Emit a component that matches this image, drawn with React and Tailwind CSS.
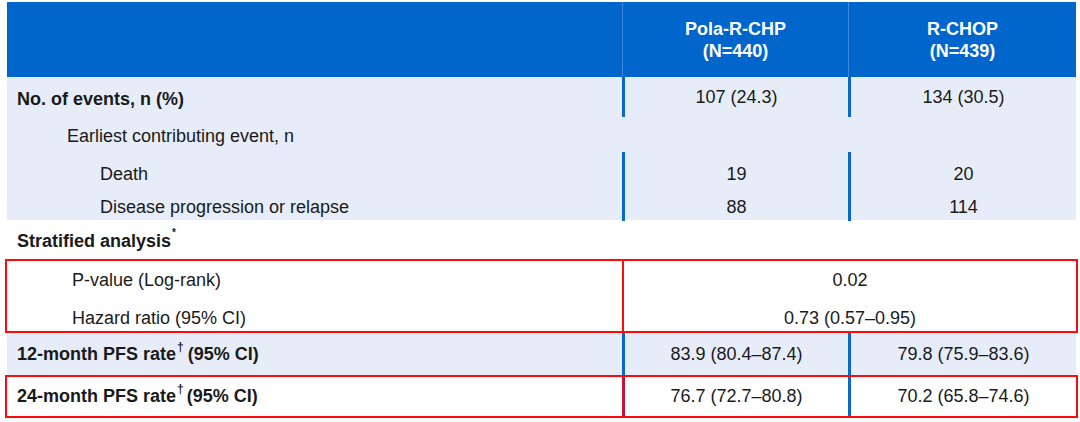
import React from 'react'

const cols = 'grid grid-cols-[615px_226px_228px]'
const light = 'bg-[#e6edf8]'
const bar = 'border-l-[3px] border-[#0a67d2]'

function Num({ children, className = '' }) {
  return (
    <div className={`flex items-center justify-center ${className}`}>{children}</div>
  )
}

export default function App() {
  return (
    <div className="w-[1080px] h-[422px] bg-white pt-[2px] pl-[7px] font-['Liberation_Sans',Arial,sans-serif] text-[18px] text-[#1a1a1a]">
      <div className="w-[1069px]">
        {/* header */}
        <div className={`${cols} h-[75px] bg-[#0066cc] text-white font-bold leading-[22px]`}>
          <div />
          <div className="flex flex-col items-center justify-center border-l border-[#3f88da]">
            <span>Pola-R-CHP</span>
            <span>(N=440)</span>
          </div>
          <div className="flex flex-col items-center justify-center border-l border-[#3f88da]">
            <span>R-CHOP</span>
            <span>(N=439)</span>
          </div>
        </div>

        {/* events */}
        <div className={`${cols} h-[40px] pt-[4px] ${light}`}>
          <div className="flex items-center pl-[10px] font-bold">No. of events, n (%)</div>
          <Num className={bar + ' -mt-[4px]'}>107 (24.3)</Num>
          <Num className={bar + ' -mt-[4px]'}>134 (30.5)</Num>
        </div>
        <div className={`h-[35px] pt-[4px] pl-[60px] flex items-center ${light}`}>
          Earliest contributing event, n
        </div>
        <div className={`${cols} h-[39px] ${light}`}>
          <div className="flex items-center pl-[93px] pt-[5px]">Death</div>
          <Num className={bar + ' pt-[5px]'}>19</Num>
          <Num className={bar + ' pt-[5px]'}>20</Num>
        </div>
        <div className={`${cols} h-[29px] ${light}`}>
          <div className="flex items-center pl-[93px] pt-[3px]">Disease progression or relapse</div>
          <Num className={bar + ' pt-[3px]'}>88</Num>
          <Num className={bar + ' pt-[3px]'}>114</Num>
        </div>

        {/* stratified */}
        <div className="h-[39px] pt-[3px] pl-[10px] flex items-center font-bold">
          Stratified analysis<sup className="text-[10px] ml-[1px] -mt-[6px]">*</sup>
        </div>
        <div className="mt-[2px] outline-2 outline-[#ff0a0a]">
          <div className="grid grid-cols-[615px_454px] h-[38px]">
            <div className="flex items-center pl-[65px]">P-value (Log-rank)</div>
            <Num className="border-l-2 border-[#ff0a0a]">0.02</Num>
          </div>
          <div className="grid grid-cols-[615px_454px] h-[32px]">
            <div className="flex items-center pl-[65px] pt-[6px]">Hazard ratio (95% CI)</div>
            <Num className="border-l-2 border-[#ff0a0a] pt-[6px]">0.73 (0.57–0.95)</Num>
          </div>
        </div>

        {/* PFS rates */}
        <div className={`${cols} h-[42px] mt-[2px] ${light}`}>
          <div className="flex items-center pl-[10px] font-bold">
            12-month PFS rate<sup className="text-[12px] -mt-[3px] ml-[1px] mr-[4px]">†</sup>(95% CI)
          </div>
          <Num className={bar}>83.9 (80.4–87.4)</Num>
          <Num className={bar}>79.8 (75.9–83.6)</Num>
        </div>
        <div className={`${cols} h-[39px] mt-[2px] outline-2 outline-[#ff0a0a]`}>
          <div className="flex items-center pl-[10px] font-bold">
            24-month PFS rate<sup className="text-[12px] -mt-[3px] ml-[1px] mr-[3px]">†</sup>(95% CI)
          </div>
          <Num className="border-l-[3px] border-[#c8123e]">76.7 (72.7–80.8)</Num>
          <Num className={bar}>70.2 (65.8–74.6)</Num>
        </div>
      </div>
    </div>
  )
}
